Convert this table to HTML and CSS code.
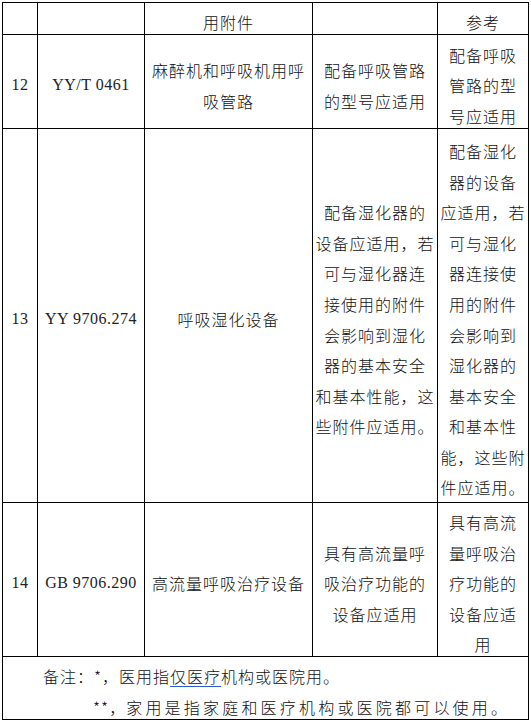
FILE: index.html
```html
<!DOCTYPE html>
<html lang="zh-CN">
<head>
<meta charset="utf-8">
<title>用附件</title>
<link rel="stylesheet" href="styles.css">
</head>
<body>
<table class="std-table">
  <tr class="row-head">
    <td class="col-no"></td>
    <td class="col-std"></td>
    <td class="col-name"><div class="txt">用附件</div></td>
    <td class="col-cond"></td>
    <td class="col-ref"><div class="txt">参考</div></td>
  </tr>
  <tr class="row-12">
    <td class="latin"><div class="txt">12</div></td>
    <td class="latin"><div class="txt">YY/T 0461</div></td>
    <td><div class="txt">麻醉机和呼吸机用呼<br>吸管路</div></td>
    <td><div class="txt">配备呼吸管路<br>的型号应适用</div></td>
    <td><div class="txt">配备呼吸<br>管路的型<br>号应适用</div></td>
  </tr>
  <tr class="row-13">
    <td class="latin"><div class="txt">13</div></td>
    <td class="latin"><div class="txt">YY 9706.274</div></td>
    <td><div class="txt">呼吸湿化设备</div></td>
    <td><div class="txt">配备湿化器的<br>设备应适用，若<br>可与湿化器连<br>接使用的附件<br>会影响到湿化<br>器的基本安全<br>和基本性能，这<br>些附件应适用。</div></td>
    <td><div class="txt">配备湿化<br>器的设备<br>应适用，若<br>可与湿化<br>器连接使<br>用的附件<br>会影响到<br>湿化器的<br>基本安全<br>和基本性<br>能，这些附<br>件应适用。</div></td>
  </tr>
  <tr class="row-14">
    <td class="latin"><div class="txt">14</div></td>
    <td class="latin"><div class="txt">GB 9706.290</div></td>
    <td><div class="txt">高流量呼吸治疗设备</div></td>
    <td><div class="txt">具有高流量呼<br>吸治疗功能的<br>设备应适用</div></td>
    <td><div class="txt">具有高流<br>量呼吸治<br>疗功能的<br>设备应适<br>用</div></td>
  </tr>
  <tr class="row-note">
    <td class="note" colspan="5">
      <div class="txt">
        <p class="note-1">备注：*，医用指<span class="uline">仅医疗</span>机构或医院用。</p>
        <p class="note-2"><span class="mark">**，</span>家用是指家庭和医疗机构或医院都可以使用。</p>
      </div>
    </td>
  </tr>
</table>
</body>
</html>
```
FILE: styles.css
```css
html, body {
  margin: 0;
  padding: 0;
  background: #fff;
}

body {
  font-family: "Noto Sans CJK SC", sans-serif;
  color: #111;
}

.std-table {
  margin: 2px 0 0 2px;
  width: 527px;
  box-sizing: border-box;
  table-layout: fixed;
  border-collapse: separate;
  border-spacing: 0;
  border-top: 1px solid #000;
  border-left: 1px solid #000;
  font-size: 16px;
  line-height: 30.6px;
}

.std-table td {
  box-sizing: border-box;
  border-right: 1px solid #000;
  border-bottom: 1px solid #000;
  padding: 0 2px;
  text-align: center;
  vertical-align: middle;
  letter-spacing: 1px;
  white-space: nowrap;
  font-weight: 300;
}

.col-no { width: 35px; }
.col-std { width: 107px; }
.col-name { width: 168px; }
.col-cond { width: 125px; }
.col-ref { width: 91px; }

.row-head { height: 32px; }
.row-12 { height: 94px; }
.row-13 { height: 374px; }
.row-14 { height: 154px; }
.row-note { height: 63px; }

.txt {
  padding-top: 4px;
  margin-bottom: -4px;
}

.std-table td.latin {
  font-family: "Liberation Serif", serif;
  font-weight: 400;
  letter-spacing: 0.5px;
  color: #222;
}

.std-table td.note {
  text-align: left;
}

.note p {
  margin: 0;
}

.note-1 {
  padding-left: 38px;
}

.note-2 {
  padding-left: 88px;
  letter-spacing: 3.2px;
}

.mark {
  letter-spacing: 1px;
}

.uline {
  text-decoration: underline;
  text-decoration-color: #2a5bd7;
  text-decoration-thickness: 1px;
  text-underline-offset: 3px;
}
```
